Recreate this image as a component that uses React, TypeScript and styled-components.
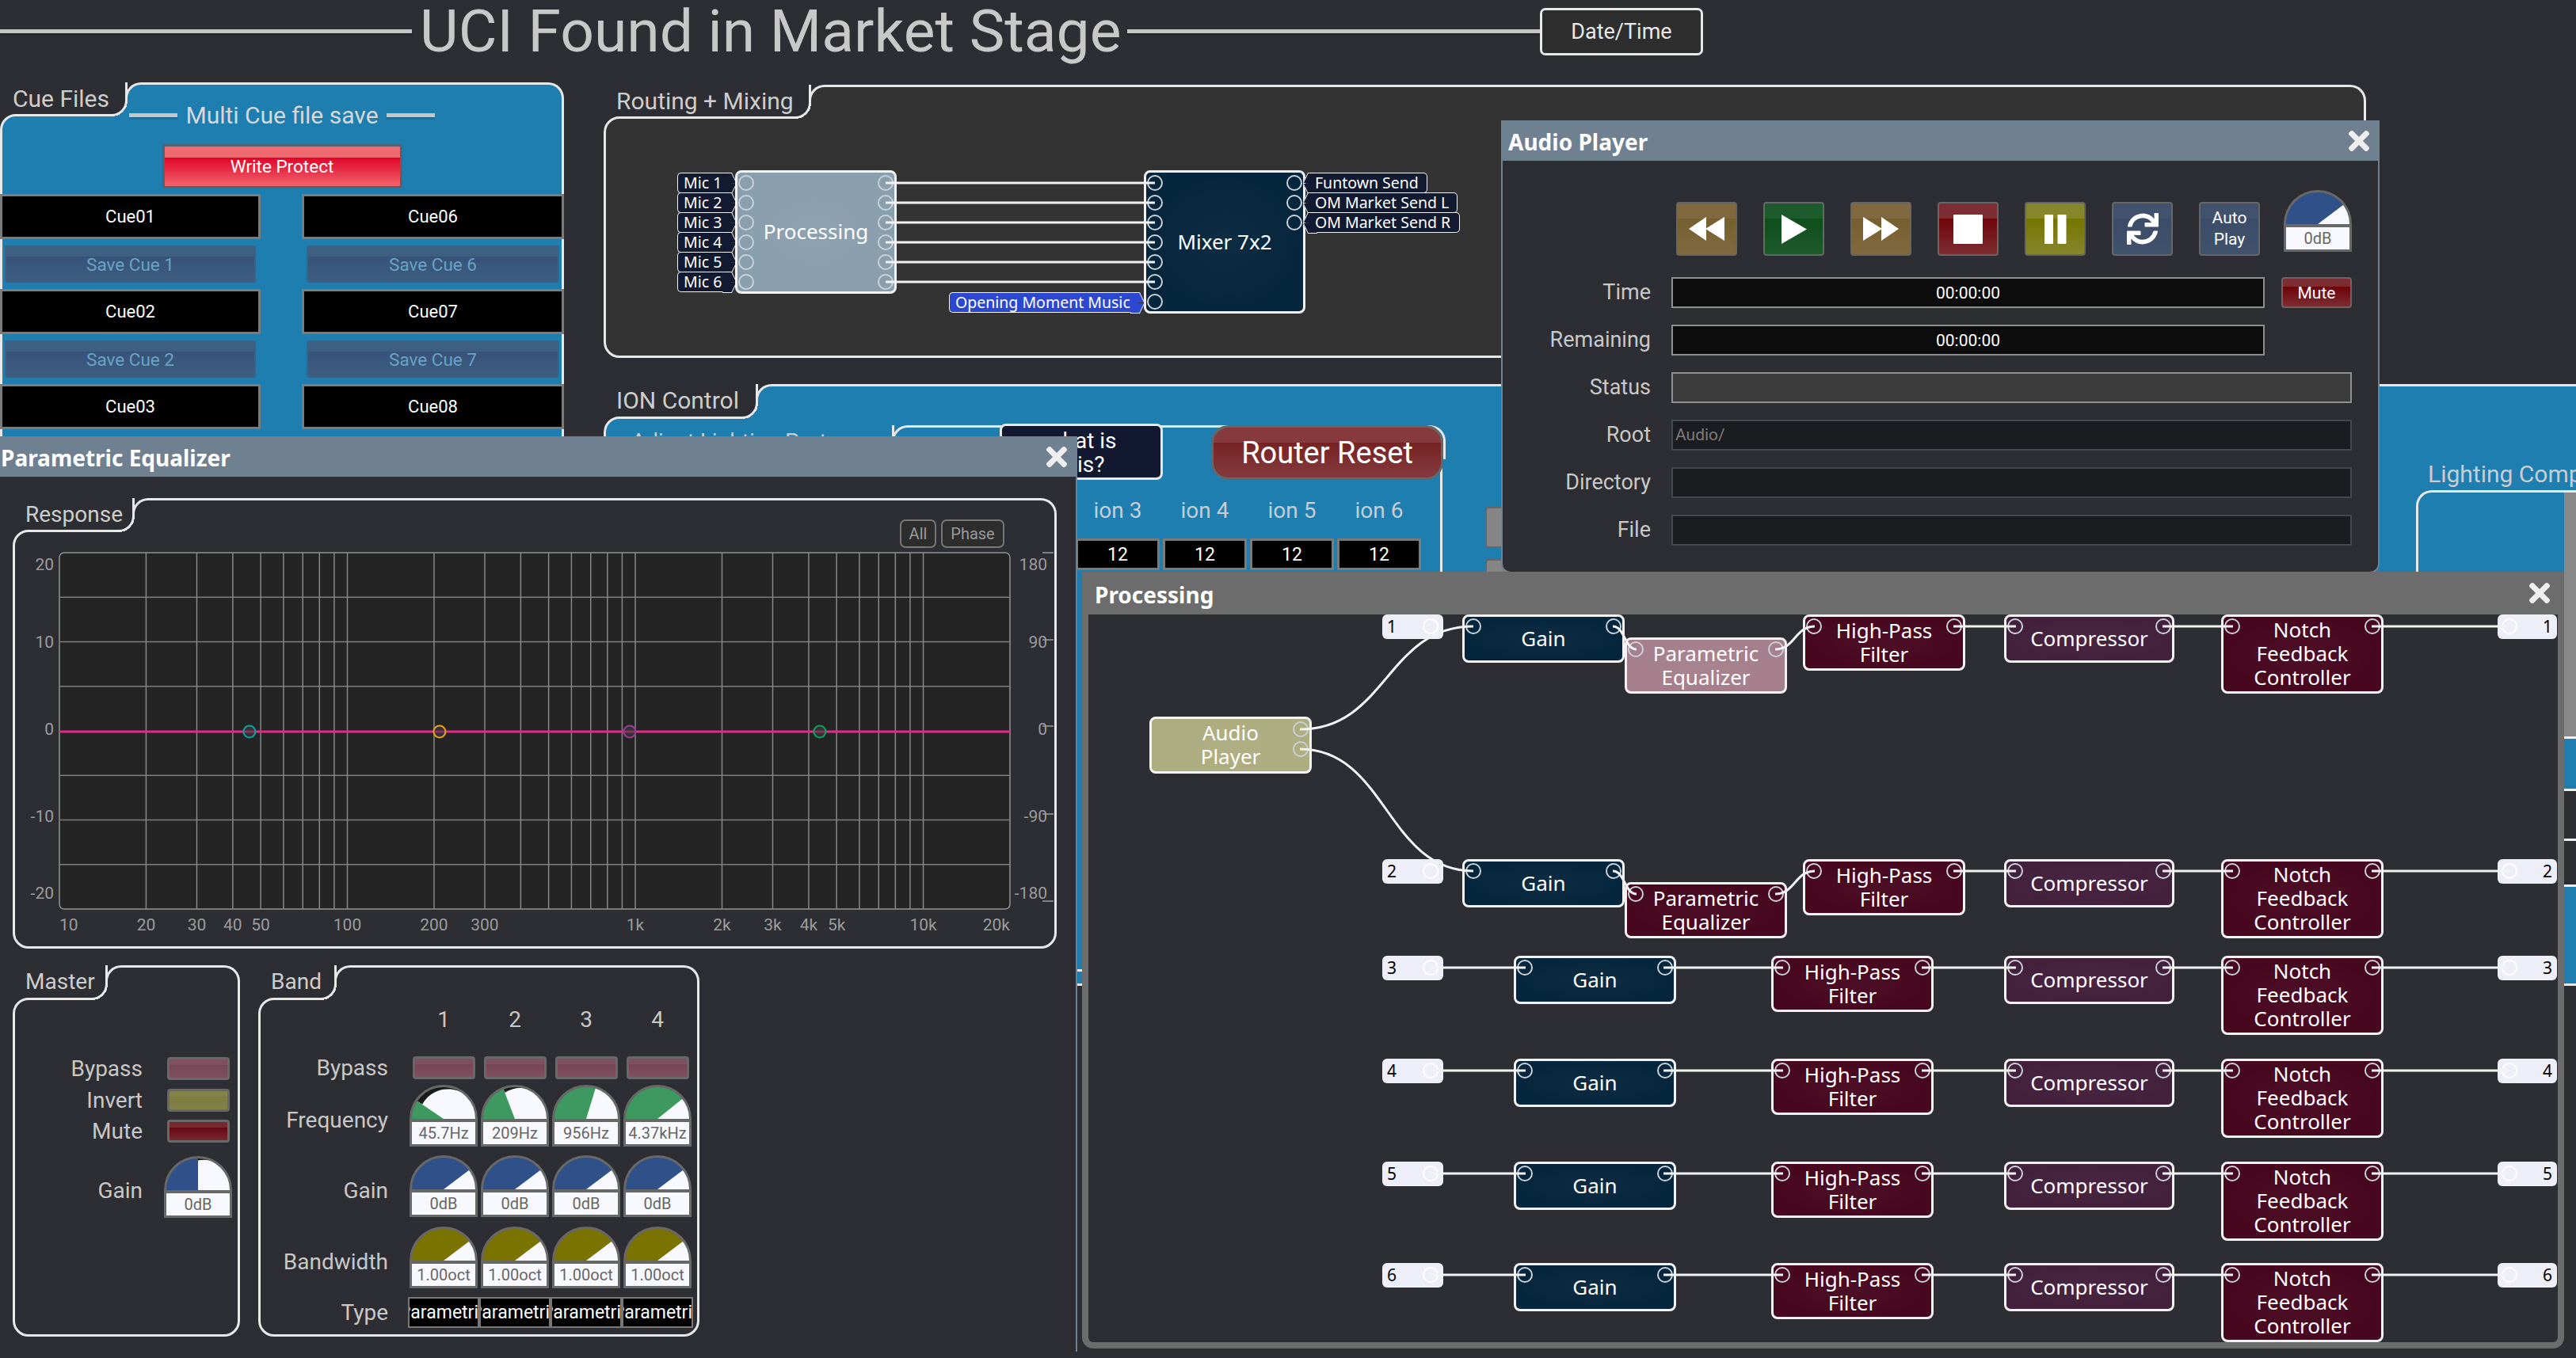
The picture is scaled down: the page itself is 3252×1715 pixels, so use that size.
import React from "react";
import styled, { createGlobalStyle } from "styled-components";
import { FaSync, FaTimes } from "react-icons/fa";

const PAGE = "#2d2e33";
const BLUE = "#1e7eb0";
const SLATE = "#6f8090";
const LINE = "#e8e8e8";
const UI = '"Roboto", "Liberation Sans", sans-serif';
const BLOCK = '"Noto Sans", "Open Sans", sans-serif';

const GlobalStyle = createGlobalStyle`
  html, body {
    margin: 0;
    background: ${PAGE};
    overflow: hidden;
  }
`;

const Page = styled.div`
  position: relative;
  width: 3252px;
  height: 1715px;
  overflow: hidden;
  background: ${PAGE};
  font-family: ${UI};
  color: #cfcfcf;
  display: flex;
  flex-direction: column;
`;

/* ---------- title ---------- */

const TitleBar = styled.header`
  display: flex;
  align-items: center;
  width: 2150px;
  height: 79px;
  flex: none;
`;

const TitleRule = styled.div<{ $w?: number }>`
  height: 5px;
  background: #c4c4c4;
  box-shadow: 0 2px 2px rgba(0, 0, 0, 0.25);
  flex: ${(p) => (p.$w ? `0 0 ${p.$w}px` : "1")};
`;

const Title = styled.h1`
  margin: 0 8px 0 10px;
  font-size: 75px;
  font-weight: 400;
  line-height: 79px;
  color: #c8c8c8;
  white-space: nowrap;
`;

const DateBox = styled.div`
  box-sizing: border-box;
  width: 206px;
  height: 60px;
  border: 3px solid ${LINE};
  border-radius: 7px;
  background: #2e2e2e;
  display: flex;
  align-items: center;
  justify-content: center;
  font-size: 27px;
  color: #e8e8e8;
`;

/* ---------- folder style group box ---------- */

const Group = styled.section<{ $w: number; $h: number }>`
  display: flex;
  flex-direction: column;
  flex: none;
  width: ${(p) => p.$w}px;
  height: ${(p) => p.$h}px;
`;

const GroupHead = styled.div<{ $h: number }>`
  display: flex;
  flex: none;
  height: ${(p) => p.$h}px;
`;

const GroupLabel = styled.div<{ $w: number; $fill: string; $size: number }>`
  position: relative;
  z-index: 2;
  flex: none;
  box-sizing: border-box;
  width: ${(p) => p.$w}px;
  margin: 0 -3px -3px 20px;
  border-right: 3px solid ${LINE};
  border-bottom: 3px solid ${LINE};
  border-bottom-right-radius: 20px;
  display: flex;
  align-items: center;
  font-size: ${(p) => p.$size}px;
  color: #cdcdcd;
  white-space: nowrap;
  &::after {
    content: "";
    position: absolute;
    right: -3px;
    bottom: -3px;
    width: 20px;
    height: 20px;
    z-index: -1;
    background: radial-gradient(circle at 0 0, transparent 20px, ${(p) => p.$fill} 20px);
  }
  > span {
    margin-left: -4px;
  }
`;

const GroupCap = styled.div<{ $fill: string }>`
  position: relative;
  z-index: 1;
  flex: 1;
  display: flex;
  box-sizing: border-box;
  margin-bottom: -3px;
  border: 3px solid ${LINE};
  border-bottom: none;
  border-radius: 20px 20px 0 0;
  background: ${(p) => p.$fill};
`;

const GroupBody = styled.div<{ $fill: string }>`
  position: relative;
  flex: 1;
  min-height: 0;
  box-sizing: border-box;
  border: 3px solid ${LINE};
  border-radius: 20px 0 20px 20px;
  background: ${(p) => p.$fill};
`;

type GroupBoxProps = {
  title: string;
  w: number;
  h: number;
  head: number;
  tab: number;
  fill: string;
  size?: number;
  cap?: React.ReactNode;
  children?: React.ReactNode;
};

const GroupBox: React.FC<GroupBoxProps> = ({ title, w, h, head, tab, fill, size = 30, cap, children }) => (
  <Group $w={w} $h={h}>
    <GroupHead $h={head}>
      <GroupLabel $w={tab} $fill={fill} $size={size}>
        <span>{title}</span>
      </GroupLabel>
      <GroupCap $fill={fill}>{cap}</GroupCap>
    </GroupHead>
    <GroupBody $fill={fill}>{children}</GroupBody>
  </Group>
);

/* ---------- background deck ---------- */

const Deck = styled.main`
  display: flex;
  gap: 50px;
  margin-top: 25px;
  min-height: 0;
`;

const RightColumn = styled.div`
  display: flex;
  flex-direction: column;
  gap: 33px;
  margin-top: 3px;
`;

const CueColumn = styled.div`
  display: flex;
  flex-direction: column;
  align-items: center;
`;

const MultiTitle = styled.div`
  display: flex;
  align-items: center;
  gap: 10px;
  height: 46px;
  margin-top: -25px;
  position: relative;
  z-index: 3;
  font-size: 30px;
  color: #d8d8d8;
  white-space: nowrap;
`;

const MultiRule = styled.i`
  display: block;
  width: 61px;
  height: 5px;
  background: #c6c6c6;
  box-shadow: 0 2px 2px rgba(0, 0, 0, 0.2);
`;

const WriteProtect = styled.button`
  box-sizing: border-box;
  width: 303px;
  height: 56px;
  margin-top: 14px;
  padding: 0;
  border: 3px solid #556270;
  border-radius: 4px;
  background: linear-gradient(#ef6a70 0 28%, #e0052a 28%, #f0636b 100%);
  color: #fff;
  font: 400 22.5px ${UI};
`;

const CueGrid = styled.div`
  display: grid;
  grid-template-columns: 329px 331px;
  column-gap: 52px;
  row-gap: 8px;
  margin: 7px -3px 0;
  align-self: stretch;
`;

const CueFile = styled.div`
  box-sizing: border-box;
  height: 57px;
  border: 3px solid #7b7b7b;
  background: #000;
  color: #fff;
  font-size: 22px;
  display: flex;
  align-items: center;
  justify-content: center;
`;

const SaveCue = styled.div`
  box-sizing: border-box;
  height: 47px;
  margin: 0 6px;
  border: 2px solid #35658a;
  border-radius: 3px;
  background: linear-gradient(#3e6080 0 28%, #38527a 28%, #3d5e80 100%);
  color: #68a3c4;
  font-size: 22.5px;
  display: flex;
  align-items: center;
  justify-content: center;
`;

const Canvas = styled.div`
  position: absolute;
  inset: 0;
`;

const WireLayer = styled.svg`
  position: absolute;
  left: 0;
  top: 0;
  overflow: visible;
  pointer-events: none;
`;

const Node = styled.div<{ $x: number; $y: number; $w: number; $h: number; $fill: string }>`
  position: absolute;
  left: ${(p) => p.$x}px;
  top: ${(p) => p.$y}px;
  width: ${(p) => p.$w}px;
  height: ${(p) => p.$h}px;
  box-sizing: border-box;
  border: 3px solid #f2f2f2;
  border-radius: 8px;
  padding-bottom: 2px;
  background: radial-gradient(ellipse at center, rgba(255, 255, 255, 0.03), transparent 70%), ${(p) => p.$fill};
  color: #fff;
  font: 400 26px/30px ${BLOCK};
  text-align: center;
  white-space: pre-line;
  display: flex;
  align-items: center;
  justify-content: center;
`;

const Port = styled.span<{ $side: "left" | "right"; $top: number }>`
  position: absolute;
  top: ${(p) => p.$top - 3 - 10}px;
  ${(p) => p.$side}: 1px;
  width: 20px;
  height: 20px;
  box-sizing: border-box;
  border: 2px solid #c9d1d8;
  border-radius: 50%;
`;

const ArrowTag = styled.div<{ $x: number; $y: number; $w: number; $fill: string; $dir: "left" | "right" }>`
  position: absolute;
  left: ${(p) => p.$x}px;
  top: ${(p) => p.$y}px;
  width: ${(p) => p.$w}px;
  height: 26px;
  box-sizing: border-box;
  border: solid #f4f4f4;
  border-width: 1.5px ${(p) => (p.$dir === "right" ? "0" : "1.5px")} 1.5px ${(p) => (p.$dir === "right" ? "1.5px" : "0")};
  border-radius: ${(p) => (p.$dir === "right" ? "5px 0 0 5px" : "0 5px 5px 0")};
  background: ${(p) => p.$fill};
  color: #fff;
  font: 400 19.5px/23px ${BLOCK};
  white-space: nowrap;
  padding-left: ${(p) => (p.$dir === "right" ? "7px" : "8px")};
  > span {
    position: relative;
    z-index: 1;
  }
  &::before,
  &::after {
    content: "";
    position: absolute;
    ${(p) => p.$dir}: -4px;
    width: 12px;
    height: 13px;
    box-sizing: border-box;
    background: ${(p) => p.$fill};
    border-${(p) => p.$dir}: 1.5px solid #f4f4f4;
  }
  &::before {
    top: -1.5px;
    border-top: 1.5px solid #f4f4f4;
    transform: skewX(${(p) => (p.$dir === "right" ? 26 : -26)}deg);
  }
  &::after {
    bottom: -1.5px;
    border-bottom: 1.5px solid #f4f4f4;
    transform: skewX(${(p) => (p.$dir === "right" ? -26 : 26)}deg);
  }
`;

/* ---------- ION control ---------- */

const IonBody = styled.div`
  display: flex;
  padding: 8px 0 0 16px;
  height: 100%;
  box-sizing: border-box;
`;

const WhatBox = styled.div`
  flex: none;
  box-sizing: border-box;
  width: 206px;
  height: 71px;
  margin: -5px 0 0 133px;
  padding-top: 4px;
  border: 3px solid ${LINE};
  border-radius: 8px;
  background: #111830;
  color: #fff;
  font-size: 28px;
  line-height: 30px;
  text-align: center;
`;

const RouterReset = styled.button`
  flex: none;
  box-sizing: border-box;
  width: 293px;
  height: 69px;
  margin: -3px 0 0 61px;
  padding: 0;
  border: 3px solid #666;
  border-radius: 22px;
  background: linear-gradient(#863a3d 0 30%, #772223 30%, #843b3e 100%);
  color: #fff;
  font: 400 38px ${UI};
`;

const PortGrid = styled.div`
  display: grid;
  grid-template-columns: repeat(4, 106px);
  grid-template-rows: 36px 40px;
  column-gap: 4px;
  row-gap: 17px;
  padding: 47px 0 0 574px;
`;

const PortName = styled.div`
  font-size: 28px;
  line-height: 36px;
  color: #c8cdd2;
  text-align: center;
`;

const PortValue = styled.div`
  box-sizing: border-box;
  border: 3px solid #7b7b7b;
  background: #000;
  color: #fff;
  font-size: 23px;
  display: flex;
  align-items: center;
  justify-content: center;
`;

const GreyStack = styled.div`
  flex: none;
  display: flex;
  flex-direction: column;
  gap: 14px;
  width: 60px;
  margin: 103px 0 0 54px;
`;

const GreyKey = styled.div`
  height: 48px;
  border-radius: 4px;
  background: #858585;
  border: 2px solid #666;
`;

const LightingWrap = styled.div`
  flex: none;
  width: 300px;
  margin: 46px 0 0 1115px;
  display: flex;
  flex-direction: column;
`;

const LightingName = styled.div`
  margin-left: 15px;
  font-size: 30px;
  line-height: 32px;
  color: #c8cdd2;
  white-space: nowrap;
`;

const LightingBox = styled.div`
  flex: 1;
  margin-top: 4px;
  border-top: 3px solid ${LINE};
  border-left: 3px solid ${LINE};
  border-top-left-radius: 20px;
  padding-left: 184px;
`;

const SideSlat = styled.div<{ $h: number; $fill: string }>`
  height: ${(p) => p.$h}px;
  background: ${(p) => p.$fill};
  border-bottom: 3px solid #eee;
`;

/* ---------- windows ---------- */

const Window = styled.div<{ $x: number; $y: number; $w: number; $h: number; $z: number }>`
  position: absolute;
  left: ${(p) => p.$x}px;
  top: ${(p) => p.$y}px;
  width: ${(p) => p.$w}px;
  height: ${(p) => p.$h}px;
  z-index: ${(p) => p.$z};
  display: flex;
  flex-direction: column;
`;

const WindowBar = styled.div<{ $h: number; $bg: string; $pad: number; $padEnd: number }>`
  flex: none;
  height: ${(p) => p.$h}px;
  box-sizing: border-box;
  padding: 3px ${(p) => p.$padEnd}px 0 ${(p) => p.$pad}px;
  background: ${(p) => p.$bg};
  display: flex;
  align-items: center;
  justify-content: space-between;
  color: #fff;
  font: 700 28px ${BLOCK};
  > svg {
    color: #eeeeee;
    margin-top: -3px;
  }
`;

const AudioBody = styled.div`
  flex: 1;
  box-sizing: border-box;
  border: 2px solid ${SLATE};
  border-top: none;
  border-radius: 0 0 12px 12px;
  background: ${PAGE};
  padding-top: 37px;
`;

const Transport = styled.div`
  display: flex;
  align-items: flex-end;
  gap: 33px;
  height: 83px;
  padding-left: 219px;
`;

const TONES: Record<string, [string, string]> = {
  brown: ["#81693f", "#75602f"],
  green: ["#1d5a2c", "#0f4f1a"],
  red: ["#7c2d32", "#6e0409"],
  olive: ["#86862c", "#757500"],
  slate: ["#40526c", "#3c4c68"],
};

const TransportKey = styled.button<{ $tone: string }>`
  flex: none;
  box-sizing: border-box;
  width: 77px;
  height: 68px;
  padding: 0;
  border: 2px solid #666;
  border-radius: 4px;
  background: linear-gradient(
    ${(p) => TONES[p.$tone][0]} 0 30%,
    ${(p) => TONES[p.$tone][1]} 30%,
    ${(p) => TONES[p.$tone][0]} 100%
  );
  color: #fff;
  font: 400 21px/27px ${UI};
  display: flex;
  align-items: center;
  justify-content: center;
`;

const KnobSlot = styled.div`
  align-self: flex-start;
  margin-left: -3px;
`;

const FormRows = styled.div`
  display: flex;
  flex-direction: column;
  gap: 21px;
  margin-top: 27px;
  width: 1072px;
`;

const FormRow = styled.div`
  display: flex;
  height: 39px;
`;

const FormLabel = styled.div`
  flex: none;
  width: 187px;
  margin-right: 26px;
  text-align: right;
  font-size: 27px;
  line-height: 39px;
  color: #c8c8c8;
`;

const ClockField = styled.div`
  flex: none;
  box-sizing: border-box;
  width: 749px;
  border: 2px solid #8f8f8f;
  background: #0c0c0c;
  color: #fff;
  font-size: 21px;
  display: flex;
  align-items: center;
  justify-content: center;
`;

const MuteKey = styled.button`
  flex: none;
  box-sizing: border-box;
  width: 89px;
  margin-left: 21px;
  padding: 0;
  border: 2px solid #666;
  border-radius: 4px;
  background: linear-gradient(#7c2d32 0 30%, #6e0409 30%, #7c2d32 100%);
  color: #fff;
  font: 400 21px ${UI};
`;

const StatusField = styled.div`
  flex: 1;
  border: 2px solid #8f8f8f;
  background: #3c3c3c;
`;

const TextField = styled.div`
  flex: 1;
  box-sizing: border-box;
  border: 2px solid #46474c;
  background: #1b1c20;
  color: #7c7c7c;
  padding-left: 3px;
  font-size: 21px;
  line-height: 35px;
`;

const EqBody = styled.div`
  flex: 1;
  box-sizing: border-box;
  border-right: 2px solid ${SLATE};
  background: ${PAGE};
  padding: 27px 0 0 16px;
`;

const ChartButtons = styled.div`
  display: flex;
  gap: 6px;
  margin: 24px 63px 0 auto;
  height: 36px;
`;

const ChartButton = styled.button<{ $w: number }>`
  box-sizing: border-box;
  width: ${(p) => p.$w}px;
  height: 36px;
  padding: 0;
  border: 2px solid #777;
  border-radius: 7px;
  background: #2d2d2d;
  color: #9a9a9a;
  font: 400 20px ${UI};
`;

const ChartSvg = styled.svg`
  display: block;
  position: absolute;
  left: 0;
  top: 0;
  overflow: visible;
`;

const ControlRow = styled.div`
  display: flex;
  gap: 23px;
  margin-top: 21px;
`;

const MasterGrid = styled.div`
  display: grid;
  grid-template-columns: 161px 86px;
  column-gap: 27px;
  grid-template-rows: 40px 39px 46px auto;
  padding-top: 72px;
`;

const BandGrid = styled.div`
  display: grid;
  grid-template-columns: 184px repeat(4, 86px);
  column-gap: 4px;
  grid-template-rows: 63px 36px 89px 90px 89px 39px;
  padding-top: 8px;
  > :nth-child(5n + 1) {
    margin-right: 23px;
  }
`;

const RowLabel = styled.div<{ $h?: number; $drop?: number }>`
  font-size: 28px;
  line-height: ${(p) => (p.$h ? `${p.$h}px` : "1.2")};
  color: #c8c8c8;
  text-align: right;
  align-self: ${(p) => (p.$h ? "start" : "center")};
  padding-top: ${(p) => p.$drop ?? 0}px;
`;

const BandNumber = styled.div`
  font-size: 28px;
  line-height: 34px;
  color: #c8c8c8;
  text-align: center;
`;

const ToggleTones: Record<string, [string, string]> = {
  bypass: ["#7e5060", "#764656"],
  invert: ["#82824a", "#7c7c40"],
  mute: ["#762a30", "#680610"],
};

const Toggle = styled.div<{ $tone: string }>`
  box-sizing: border-box;
  width: 79px;
  height: 29px;
  justify-self: center;
  border: 3px solid #686868;
  border-radius: 4px;
  background: linear-gradient(
    ${(p) => ToggleTones[p.$tone][0]} 0 30%,
    ${(p) => ToggleTones[p.$tone][1]} 30%,
    ${(p) => ToggleTones[p.$tone][0]} 100%
  );
`;

const KnobShell = styled.div`
  display: flex;
  flex-direction: column;
  width: 86px;
`;

const KnobValue = styled.div`
  box-sizing: border-box;
  height: 35px;
  margin-top: -1px;
  border: 3px solid #686868;
  border-top-width: 4px;
  background: #f8f9ff;
  color: #666;
  font-size: 20px;
  display: flex;
  align-items: center;
  justify-content: center;
  white-space: nowrap;
`;

const TypeCell = styled.div`
  box-sizing: border-box;
  height: 39px;
  margin: 0 -2px;
  border: 2px solid #777;
  background: #000;
  color: #fff;
  font-size: 23px;
  overflow: hidden;
  display: flex;
  align-items: center;
  justify-content: center;
  white-space: nowrap;
`;

const ProcessingBody = styled.div`
  flex: 1;
  position: relative;
  box-sizing: border-box;
  border: 8px solid #6c6c6c;
  border-top: none;
  border-radius: 0 0 14px 14px;
  background: ${PAGE};
`;

const OutTag = styled.div<{ $x: number; $y: number; $align: "left" | "right" }>`
  position: absolute;
  left: ${(p) => p.$x}px;
  top: ${(p) => p.$y}px;
  width: ${(p) => (p.$align === "left" ? 77 : 75)}px;
  height: 31px;
  box-sizing: border-box;
  border-radius: 6px;
  background: #eeeef8;
  color: #000;
  font: 400 21px/30px ${BLOCK};
  text-align: ${(p) => p.$align};
  padding: 0 6px;
`;

const TagPort = styled.span<{ $x: number }>`
  position: absolute;
  left: ${(p) => p.$x}px;
  top: 5px;
  width: 20px;
  height: 20px;
  box-sizing: border-box;
  border: 2px solid #fff;
  border-radius: 50%;
`;

/* ---------- drawings ---------- */

const pt = (deg: number, r: number) => {
  const a = (deg * Math.PI) / 180;
  return `${(43 - r * Math.cos(a)).toFixed(2)} ${(43 - r * Math.sin(a)).toFixed(2)}`;
};

type KnobProps = {
  angle: number;
  color: string;
  value: string;
  tipEnd?: number;
  tipDepth?: number;
};

const Knob: React.FC<KnobProps> = ({ angle, color, value, tipEnd, tipDepth }) => {
  const R = 41.5;
  return (
    <KnobShell>
      <svg width="86" height="44" viewBox="0 0 86 44">
        <path d={`M1.5 43 A${R} ${R} 0 0 1 84.5 43 Z`} fill="#f8f9ff" />
        {tipEnd && tipDepth ? (
          <path
            d={`M${pt(angle, R)} A${R} ${R} 0 0 1 ${pt(tipEnd, R)} A${R - tipDepth / 2} ${R - tipDepth / 2} 0 0 0 ${pt(angle, R - tipDepth)} Z`}
            fill="#1a1a1a"
          />
        ) : null}
        <path d={`M1.5 43 A${R} ${R} 0 0 1 ${pt(angle, R)} L43 43 Z`} fill={color} />
        <path d={`M1.5 43 A${R} ${R} 0 0 1 84.5 43`} fill="none" stroke="#686868" strokeWidth="3" />
      </svg>
      <KnobValue>{value}</KnobValue>
    </KnobShell>
  );
};

const ChevronIcon: React.FC<{ flip?: boolean }> = ({ flip }) => (
  <svg width="45" height="30" viewBox="0 0 45 30">
    <g fill="#fff" transform={flip ? "translate(45 0) scale(-1 1)" : undefined}>
      <path d="M0 15 L22 0 V30 Z" />
      <path d="M21 15 L45 0 V30 Z" />
    </g>
  </svg>
);

const PlayIcon = () => (
  <svg width="32" height="37" viewBox="0 0 32 37">
    <path d="M0 0 L32 18.5 L0 37 Z" fill="#fff" />
  </svg>
);

const StopIcon = () => (
  <svg width="37" height="37" viewBox="0 0 37 37">
    <rect width="37" height="37" rx="1" fill="#fff" />
  </svg>
);

const PauseIcon = () => (
  <svg width="28" height="37" viewBox="0 0 28 37">
    <rect width="11" height="37" rx="1" fill="#fff" />
    <rect x="16.5" width="11" height="37" rx="1" fill="#fff" />
  </svg>
);

const CHART_X = 19;
const CHART_Y = 672;
const fx = (f: number) => 75 + (1200 * Math.log10(f / 10)) / Math.log10(2000) - CHART_X;
const py = (y: number) => y - CHART_Y;

const GRID_FREQS = [
  20, 30, 40, 50, 60, 70, 80, 90, 100, 200, 300, 400, 500, 600, 700, 800, 900, 1000, 2000, 3000, 4000, 5000, 6000,
  7000, 8000, 9000, 10000,
];
const FREQ_LABELS: [number, string][] = [
  [20, "20"],
  [30, "30"],
  [40, "40"],
  [50, "50"],
  [100, "100"],
  [200, "200"],
  [300, "300"],
  [1000, "1k"],
  [2000, "2k"],
  [3000, "3k"],
  [4000, "4k"],
  [5000, "5k"],
  [10000, "10k"],
];
const DB_LABELS: [number, string][] = [
  [712, "20"],
  [810, "10"],
  [920, "0"],
  [1030, "-10"],
  [1127, "-20"],
];
const PHASE_LABELS: [number, string, number][] = [
  [712, "180", 698],
  [810, "90", 808],
  [920, "0", 917],
  [1030, "-90", 1028],
  [1127, "-180", 1138],
];
const HANDLES: [number, string][] = [
  [45.7, "#12a0a0"],
  [209, "#e8a020"],
  [956, "#a03a9a"],
  [4370, "#10a060"],
];

const ResponseChart = () => {
  const left = 75 - CHART_X;
  const right = 1275 - CHART_X;
  const rows = [1, 2, 3, 4, 5, 6, 7].filter((i) => i !== 4).map((i) => py(698 + i * 56.25));
  const labelStyle = { fontFamily: UI, fontSize: 21, fill: "#9c9c9c" };
  return (
    <ChartSvg width="1312" height="500" viewBox="0 0 1312 500">
      <rect x={left} y={py(698)} width={1200} height={450} rx="6" fill="#242424" stroke="#929292" strokeWidth="1.5" />
      {rows.map((y) => (
        <line key={y} x1={left} x2={right} y1={y} y2={y} stroke="#7e7e7e" strokeWidth="1.5" />
      ))}
      {GRID_FREQS.map((f) => (
        <line key={f} x1={fx(f)} x2={fx(f)} y1={py(698)} y2={py(1148)} stroke="#888" strokeWidth="1.5" />
      ))}
      <line x1={left} x2={right} y1={py(924)} y2={py(924)} stroke="#e6288a" strokeWidth="3" />
      {HANDLES.map(([f, c]) => (
        <circle key={f} cx={fx(f)} cy={py(924)} r="7.5" fill="rgba(60,60,60,.55)" stroke={c} strokeWidth="2" />
      ))}
      {DB_LABELS.map(([y, t]) => (
        <text key={t} x={68 - CHART_X} y={py(y + 8)} textAnchor="end" {...labelStyle}>
          {t}
        </text>
      ))}
      {PHASE_LABELS.map(([y, t, tick]) => (
        <g key={t}>
          <text x={1322 - CHART_X} y={py(y + 8)} textAnchor="end" {...labelStyle}>
            {t}
          </text>
          <line x1={1316 - CHART_X} x2={1330 - CHART_X} y1={py(tick)} y2={py(tick)} stroke="#9c9c9c" strokeWidth="1.5" />
        </g>
      ))}
      <text x={left} y={py(1175)} {...labelStyle}>
        10
      </text>
      {FREQ_LABELS.map(([f, t]) => (
        <text key={t} x={fx(f)} y={py(1175)} textAnchor="middle" {...labelStyle}>
          {t}
        </text>
      ))}
      <text x={right} y={py(1175)} textAnchor="end" {...labelStyle}>
        20k
      </text>
    </ChartSvg>
  );
};

/* ---------- routing + mixing data ---------- */

const RX = 765;
const RY = 150;
const ROUTE_ROWS = [231, 256, 281, 306, 331, 356];
const MICS = ["Mic 1", "Mic 2", "Mic 3", "Mic 4", "Mic 5", "Mic 6"];
const SENDS: [string, number, number][] = [
  ["Funtown Send", 218, 156],
  ["OM Market Send L", 243, 194],
  ["OM Market Send R", 268, 197],
];

const RoutingDiagram = () => (
  <Canvas>
    {MICS.map((m, i) => (
      <ArrowTag key={m} $x={855 - RX} $y={218 + i * 25 - RY} $w={68} $fill="#111a30" $dir="right">
        <span>{m}</span>
      </ArrowTag>
    ))}
    <Node $x={928 - RX} $y={215 - RY} $w={204} $h={156} $fill="#8a9fae">
      Processing
      {ROUTE_ROWS.map((y) => (
        <React.Fragment key={y}>
          <Port $side="left" $top={y - 215} />
          <Port $side="right" $top={y - 215} />
        </React.Fragment>
      ))}
    </Node>
    <Node $x={1444 - RX} $y={215 - RY} $w={204} $h={181} $fill="#06263d">
      Mixer 7x2
      {[...ROUTE_ROWS, 381].map((y) => (
        <Port key={y} $side="left" $top={y - 215} />
      ))}
      {ROUTE_ROWS.slice(0, 3).map((y) => (
        <Port key={y} $side="right" $top={y - 215} />
      ))}
    </Node>
    <ArrowTag $x={1198 - RX} $y={369 - RY} $w={240} $fill="#2d48d0" $dir="right">
      <span>Opening Moment Music</span>
    </ArrowTag>
    {SENDS.map(([name, y, w]) => (
      <ArrowTag key={name} $x={1652 - RX} $y={y - RY} $w={w - 6} $fill="#111a30" $dir="left">
        <span>{name}</span>
      </ArrowTag>
    ))}
    <WireLayer width="10" height="10">
      {ROUTE_ROWS.map((y) => (
        <line key={y} x1={1118 - RX} x2={1458 - RX} y1={y - RY} y2={y - RY} stroke="#f2f2f2" strokeWidth="3" />
      ))}
    </WireLayer>
  </Canvas>
);

/* ---------- processing data ---------- */

const PX = 1374;
const PY = 776;

const TAG_TOPS = [776, 1085, 1207, 1337, 1467, 1595];

type BlockDef = { x: number; w: number; dy: number; h: number; fill: string; text: string };

const blocksFor = (row: number): BlockDef[] => {
  const top = row < 2;
  const rows: BlockDef[] = [
    { x: top ? 1846 : 1911, w: 205, dy: 0, h: 61, fill: "#06263d", text: "Gain" },
    { x: top ? 2276 : 2236, w: 205, dy: 0, h: 71, fill: "#47071f", text: "High-Pass\nFilter" },
    { x: 2530, w: 215, dy: 0, h: 61, fill: "#43203c", text: "Compressor" },
    { x: 2804, w: 205, dy: 0, h: 100, fill: "#47071f", text: "Notch\nFeedback\nController" },
  ];
  if (top) {
    rows.splice(1, 0, {
      x: 2051,
      w: 205,
      dy: 29,
      h: 71,
      fill: row === 0 ? "#a5808c" : "#47071f",
      text: "Parametric\nEqualizer",
    });
  }
  return rows;
};

const curve = (x1: number, y1: number, x2: number, y2: number) => {
  const mx = (x1 + x2) / 2;
  return `M${x1 - PX} ${y1 - PY} C${mx - PX} ${y1 - PY} ${mx - PX} ${y2 - PY} ${x2 - PX} ${y2 - PY}`;
};

const ProcessingDiagram = () => (
  <Canvas>
    <Node $x={1451 - PX} $y={905 - PY} $w={205} $h={72} $fill="#aead80">
      {"Audio\nPlayer"}
      <Port $side="right" $top={16} />
      <Port $side="right" $top={41} />
    </Node>
    {TAG_TOPS.map((top, row) => (
      <React.Fragment key={top}>
        <OutTag $x={1745 - PX} $y={top - PY} $align="left">
          {row + 1}
          <TagPort $x={51} />
        </OutTag>
        <OutTag $x={3153 - PX} $y={top - PY} $align="right">
          {row + 1}
          <TagPort $x={5} />
        </OutTag>
        {blocksFor(row).map((b) => (
          <Node key={b.text} $x={b.x - PX} $y={top + b.dy - PY} $w={b.w} $h={b.h} $fill={b.fill}>
            {b.text}
            <Port $side="left" $top={15} />
            <Port $side="right" $top={15} />
          </Node>
        ))}
      </React.Fragment>
    ))}
    <WireLayer width="10" height="10" fill="none" stroke="#f2f2f2" strokeWidth="3">
      <path d={curve(1641, 921, 1860, 791)} />
      <path d={curve(1641, 946, 1860, 1100)} />
      {TAG_TOPS.map((top, row) => {
        const y = top + 15;
        if (row < 2) {
          return (
            <g key={top}>
              <path d={curve(2036, y, 2066, y + 29)} />
              <path d={curve(2241, y + 29, 2291, y)} />
              <path d={`M${2466 - PX} ${y - PY} H${2545 - PX}`} />
              <path d={`M${2730 - PX} ${y - PY} H${2819 - PX}`} />
              <path d={`M${2994 - PX} ${y - PY} H${3168 - PX}`} />
            </g>
          );
        }
        return (
          <g key={top}>
            <path d={`M${1806 - PX} ${y - PY} H${1926 - PX}`} />
            <path d={`M${2100 - PX} ${y - PY} H${2251 - PX}`} />
            <path d={`M${2426 - PX} ${y - PY} H${2545 - PX}`} />
            <path d={`M${2730 - PX} ${y - PY} H${2819 - PX}`} />
            <path d={`M${2994 - PX} ${y - PY} H${3168 - PX}`} />
          </g>
        );
      })}
    </WireLayer>
  </Canvas>
);

const BANDS = [
  { freq: "45.7Hz", angle: 34, tipEnd: 140, tipDepth: 9 },
  { freq: "209Hz", angle: 69, tipEnd: 115, tipDepth: 6 },
  { freq: "956Hz", angle: 107 },
  { freq: "4.37kHz", angle: 141 },
];

const CUES = [
  ["Cue01", "Cue06"],
  ["Cue02", "Cue07"],
  ["Cue03", "Cue08"],
];

const App: React.FC = () => (
  <Page>
    <GlobalStyle />
    <TitleBar>
      <TitleRule $w={520} />
      <Title>UCI Found in Market Stage</Title>
      <TitleRule />
      <DateBox>Date/Time</DateBox>
    </TitleBar>

    <Deck>
      <GroupBox title="Cue Files" w={712} h={540} head={40} tab={141} fill={BLUE}>
        <CueColumn>
          <MultiTitle>
            <MultiRule />
            Multi Cue file save
            <MultiRule />
          </MultiTitle>
          <WriteProtect>Write Protect</WriteProtect>
          <CueGrid>
            <CueFile>{CUES[0][0]}</CueFile>
            <CueFile>{CUES[0][1]}</CueFile>
            <SaveCue>Save Cue 1</SaveCue>
            <SaveCue>Save Cue 6</SaveCue>
            <CueFile>{CUES[1][0]}</CueFile>
            <CueFile>{CUES[1][1]}</CueFile>
            <SaveCue>Save Cue 2</SaveCue>
            <SaveCue>Save Cue 7</SaveCue>
            <CueFile>{CUES[2][0]}</CueFile>
            <CueFile>{CUES[2][1]}</CueFile>
          </CueGrid>
        </CueColumn>
      </GroupBox>

      <RightColumn>
        <GroupBox title="Routing + Mixing" w={2225} h={345} head={40} tab={242} fill="#333333">
          <RoutingDiagram />
        </GroupBox>

        <GroupBox title="ION Control" w={2530} h={760} head={41} tab={175} fill={BLUE}>
          <IonBody>
            <GroupBox
              title="Adjust Lighting Port"
              w={1040}
              h={690}
              head={40}
              tab={328}
              size={28}
              fill={BLUE}
              cap={
                <>
                  <WhatBox>
                    what is
                    <br />
                    this?
                  </WhatBox>
                  <RouterReset>Router Reset</RouterReset>
                </>
              }
            >
              <PortGrid>
                <PortName>ion 3</PortName>
                <PortName>ion 4</PortName>
                <PortName>ion 5</PortName>
                <PortName>ion 6</PortName>
                <PortValue>12</PortValue>
                <PortValue>12</PortValue>
                <PortValue>12</PortValue>
                <PortValue>12</PortValue>
              </PortGrid>
            </GroupBox>
            <GreyStack>
              <GreyKey />
              <GreyKey />
            </GreyStack>
            <LightingWrap>
              <LightingName>Lighting Comp</LightingName>
              <LightingBox>
                <SideSlat $h={308} $fill="#888" />
                <SideSlat $h={63} $fill={BLUE} />
                <SideSlat $h={60} $fill="#2d2e33" />
                <SideSlat $h={55} $fill="#2d2e33" />
              </LightingBox>
            </LightingWrap>
          </IonBody>
        </GroupBox>
      </RightColumn>
    </Deck>

    <Window $x={1895} $y={152} $w={1109} $h={572} $z={1}>
      <WindowBar $h={51} $bg={SLATE} $pad={9} $padEnd={7}>
        Audio Player
        <FaTimes size={38} />
      </WindowBar>
      <AudioBody>
        <Transport>
          <TransportKey $tone="brown">
            <ChevronIcon />
          </TransportKey>
          <TransportKey $tone="green">
            <PlayIcon />
          </TransportKey>
          <TransportKey $tone="brown">
            <ChevronIcon flip />
          </TransportKey>
          <TransportKey $tone="red">
            <StopIcon />
          </TransportKey>
          <TransportKey $tone="olive">
            <PauseIcon />
          </TransportKey>
          <TransportKey $tone="slate">
            <FaSync size={40} />
          </TransportKey>
          <TransportKey $tone="slate">
            Auto
            <br />
            Play
          </TransportKey>
          <KnobSlot>
            <Knob angle={143} color="#2f5088" value="0dB" />
          </KnobSlot>
        </Transport>
        <FormRows>
          <FormRow>
            <FormLabel>Time</FormLabel>
            <ClockField>00:00:00</ClockField>
            <MuteKey>Mute</MuteKey>
          </FormRow>
          <FormRow>
            <FormLabel>Remaining</FormLabel>
            <ClockField>00:00:00</ClockField>
          </FormRow>
          <FormRow>
            <FormLabel>Status</FormLabel>
            <StatusField />
          </FormRow>
          <FormRow>
            <FormLabel>Root</FormLabel>
            <TextField>Audio/</TextField>
          </FormRow>
          <FormRow>
            <FormLabel>Directory</FormLabel>
            <TextField />
          </FormRow>
          <FormRow>
            <FormLabel>File</FormLabel>
            <TextField />
          </FormRow>
        </FormRows>
      </AudioBody>
    </Window>

    <Window $x={1366} $y={722} $w={1871} $h={981} $z={2}>
      <WindowBar $h={54} $bg="#6c6c6c" $pad={16} $padEnd={12}>
        Processing
        <FaTimes size={38} />
      </WindowBar>
      <ProcessingBody>
        <ProcessingDiagram />
      </ProcessingBody>
    </Window>

    <Window $x={0} $y={551} $w={1360} $h={1156} $z={3}>
      <WindowBar $h={51} $bg={SLATE} $pad={1} $padEnd={7}>
        Parametric Equalizer
        <FaTimes size={38} />
      </WindowBar>
      <EqBody>
        <GroupBox
          title="Response"
          w={1318}
          h={569}
          head={40}
          tab={134}
          size={28}
          fill={PAGE}
          cap={
            <ChartButtons>
              <ChartButton $w={46}>All</ChartButton>
              <ChartButton $w={80}>Phase</ChartButton>
            </ChartButtons>
          }
        >
          <Canvas>
            <ResponseChart />
          </Canvas>
        </GroupBox>
        <ControlRow>
          <GroupBox title="Master" w={287} h={469} head={41} tab={100} size={28} fill={PAGE}>
            <MasterGrid>
              <RowLabel $h={29}>Bypass</RowLabel>
              <Toggle $tone="bypass" />
              <RowLabel $h={29}>Invert</RowLabel>
              <Toggle $tone="invert" />
              <RowLabel $h={29}>Mute</RowLabel>
              <Toggle $tone="mute" />
              <RowLabel $drop={10}>Gain</RowLabel>
              <Knob angle={90} color="#2f5088" value="0dB" tipEnd={120} tipDepth={4} />
            </MasterGrid>
          </GroupBox>
          <GroupBox title="Band" w={557} h={469} head={41} tab={79} size={28} fill={PAGE}>
            <BandGrid>
              <span />
              {[1, 2, 3, 4].map((n) => (
                <BandNumber key={n}>{n}</BandNumber>
              ))}
              <RowLabel $h={29}>Bypass</RowLabel>
              {BANDS.map((b) => (
                <Toggle key={b.freq} $tone="bypass" />
              ))}
              <RowLabel>Frequency</RowLabel>
              {BANDS.map((b) => (
                <Knob key={b.freq} angle={b.angle} color="#3d9960" value={b.freq} tipEnd={b.tipEnd} tipDepth={b.tipDepth} />
              ))}
              <RowLabel>Gain</RowLabel>
              {BANDS.map((b) => (
                <Knob key={b.freq} angle={143} color="#2f5088" value="0dB" />
              ))}
              <RowLabel>Bandwidth</RowLabel>
              {BANDS.map((b) => (
                <Knob key={b.freq} angle={143} color="#7b7300" value="1.00oct" />
              ))}
              <RowLabel>Type</RowLabel>
              {BANDS.map((b) => (
                <TypeCell key={b.freq}>Parametric</TypeCell>
              ))}
            </BandGrid>
          </GroupBox>
        </ControlRow>
      </EqBody>
    </Window>
  </Page>
);

export default App;
